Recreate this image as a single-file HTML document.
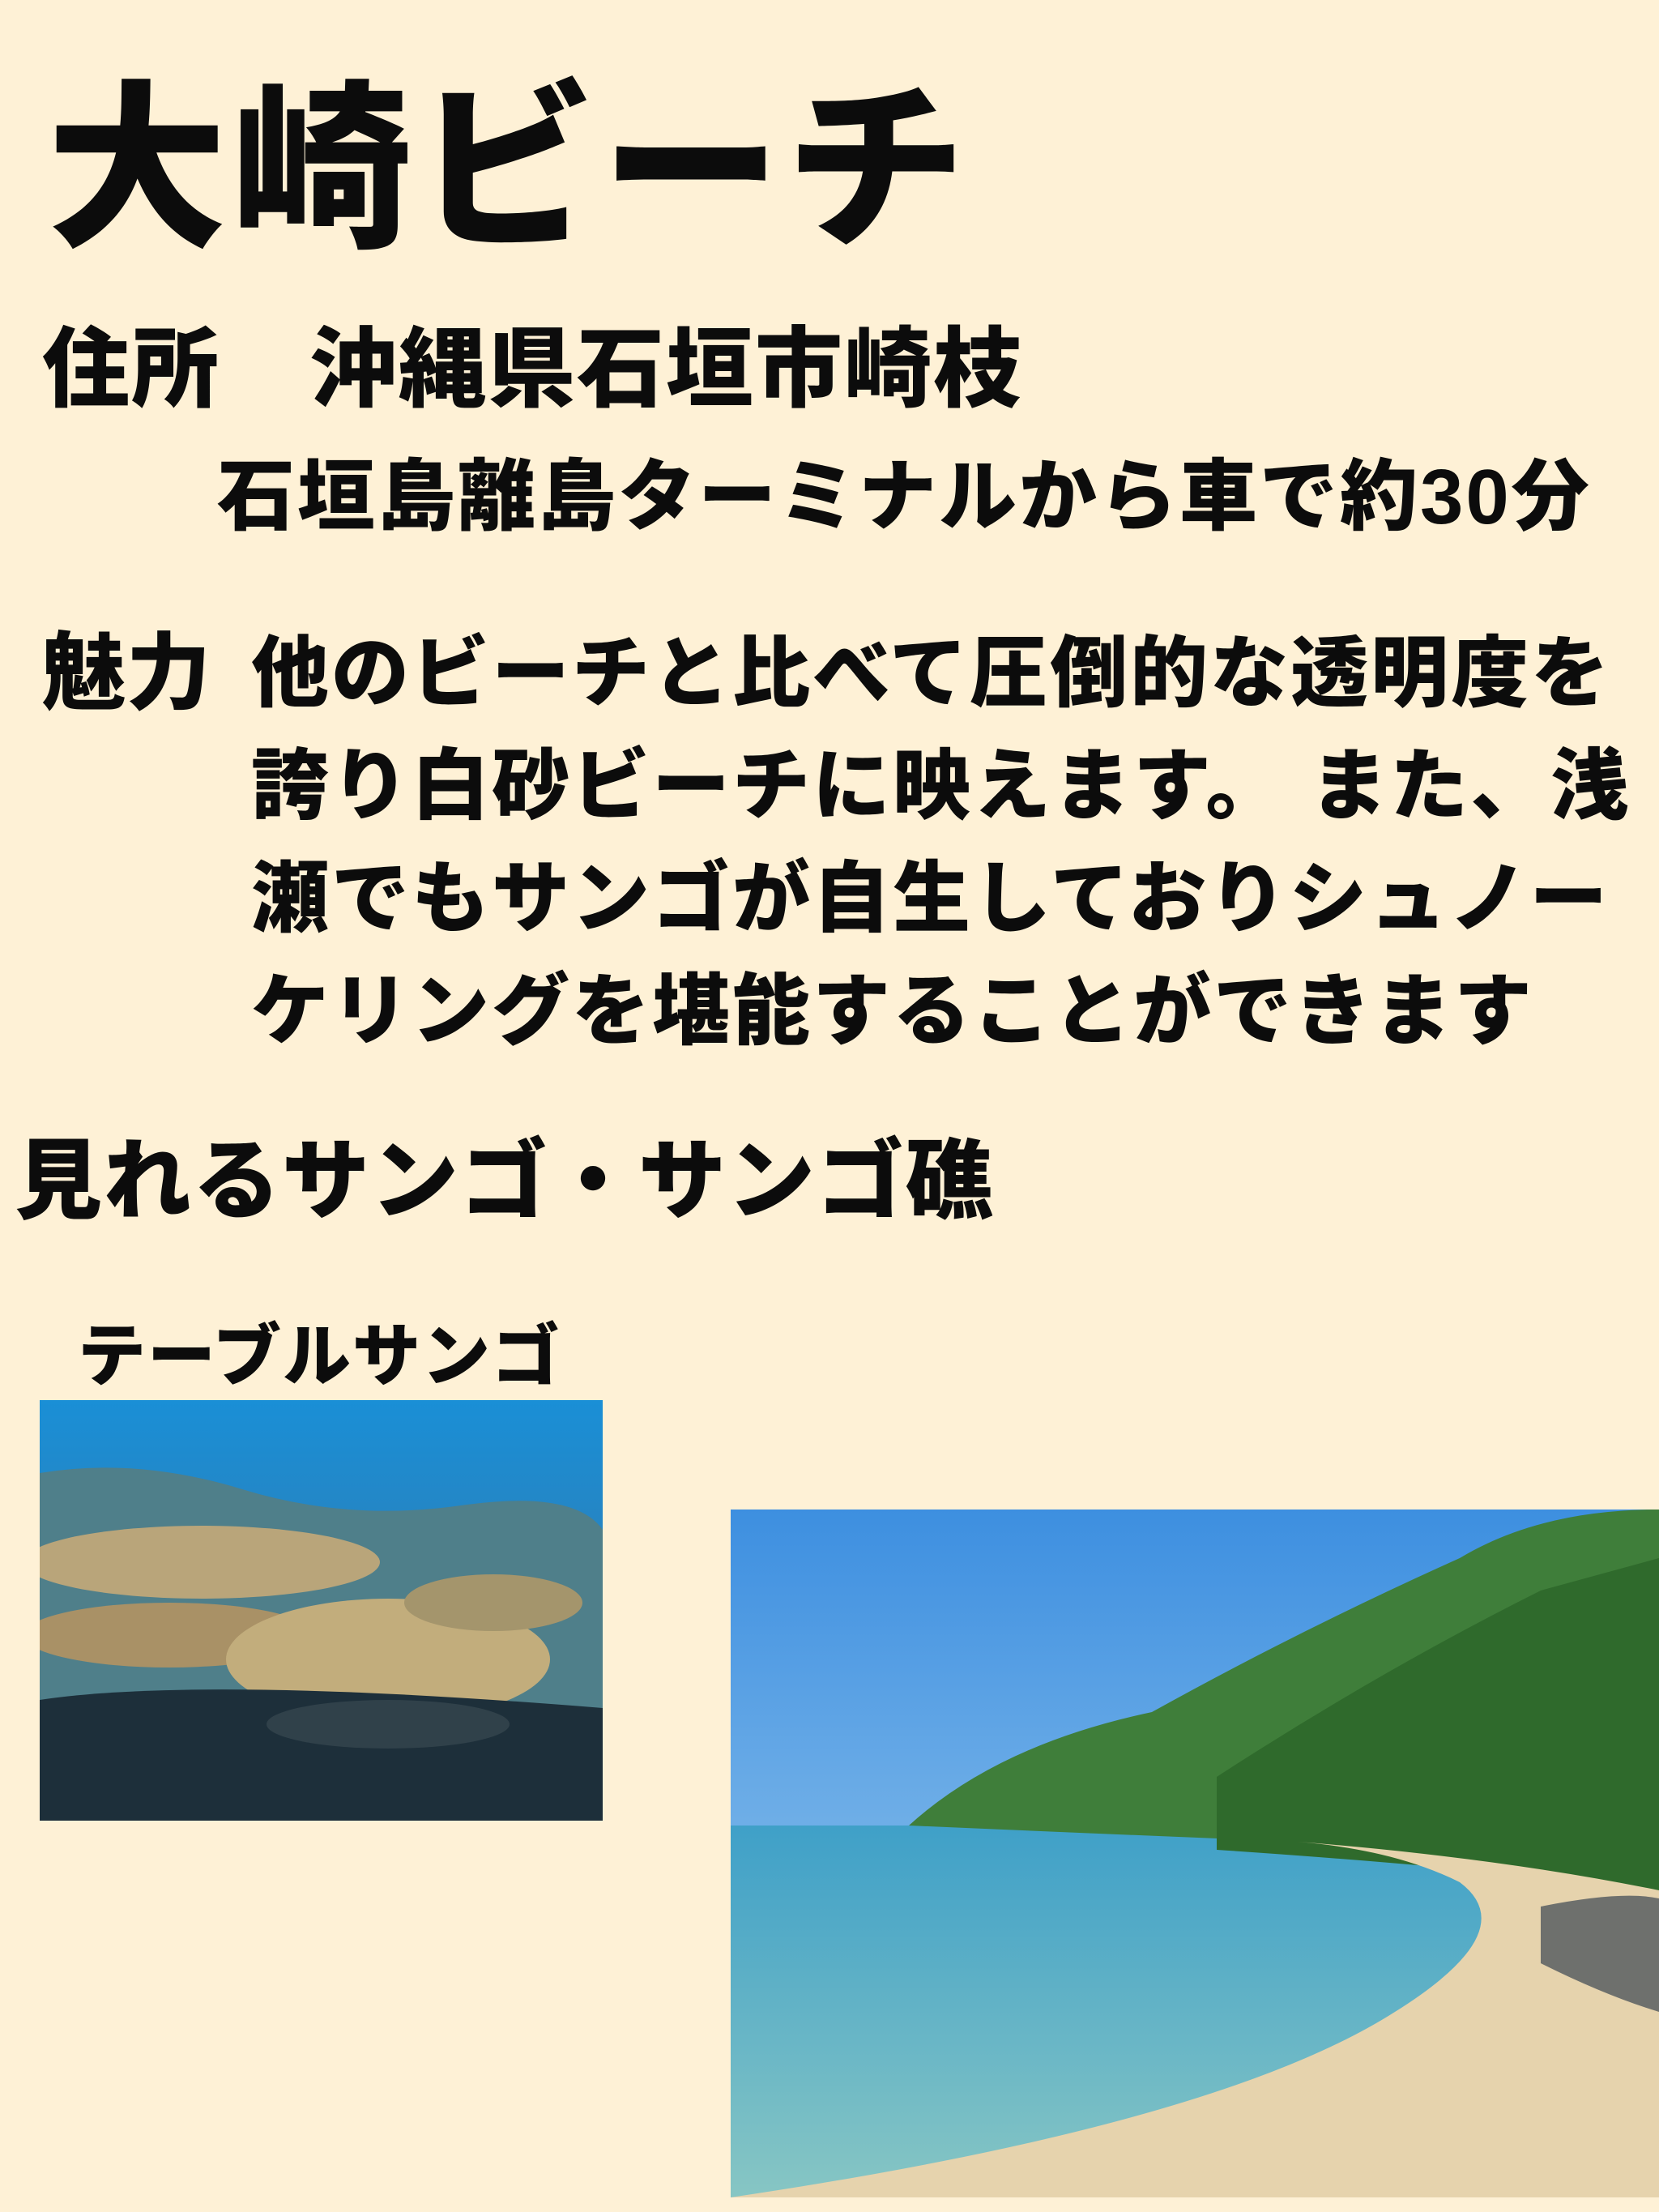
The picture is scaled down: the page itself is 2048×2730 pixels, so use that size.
<!DOCTYPE html>
<html><head><meta charset="utf-8"><style>
html,body{margin:0;padding:0}
body{width:2048px;height:2730px;background:#fef1d6;position:relative;overflow:hidden;font-family:"Liberation Sans","Noto Sans CJK JP",sans-serif;font-weight:900;color:#0c0c0c}
.t{position:absolute;white-space:nowrap;line-height:1}
</style></head><body>
<div class="t" style="left:58px;top:100px;font-size:222px;letter-spacing:6px">大崎ビーチ</div>
<div class="t" style="left:52px;top:402px;font-size:108px;letter-spacing:2px">住所　沖縄県石垣市崎枝</div>
<div class="t" style="left:268px;top:566px;font-size:96px;letter-spacing:3px">石垣島離島ターミナルから車で約30分</div>
<div class="t" style="left:52px;top:780px;font-size:104px">魅力</div>
<div class="t" style="left:310px;top:762px;font-size:96px;line-height:139px;letter-spacing:3px;white-space:normal;width:1720px">他のビーチと比べて圧倒的な透明度を<br>誇り白砂ビーチに映えます。 また、浅<br>瀬でもサンゴが自生しておりシュノー<br>ケリングを堪能することができます</div>
<div class="t" style="left:18px;top:1404px;font-size:108px;letter-spacing:2px">見れるサンゴ・サンゴ礁</div>
<div class="t" style="left:96px;top:1632px;font-size:84px;letter-spacing:2px">テーブルサンゴ</div>
<svg style="position:absolute;left:49px;top:1728px" width="695" height="519" viewBox="0 0 695 519">
<defs><linearGradient id="w" x1="0" y1="0" x2="0" y2="1"><stop offset="0" stop-color="#1a8fd6"/><stop offset="0.5" stop-color="#2c7fb8"/><stop offset="1" stop-color="#123a58"/></linearGradient></defs>
<rect width="695" height="519" fill="url(#w)"/>
<path d="M0 90 Q120 70 250 110 T520 130 T695 160 V519 H0Z" fill="#4f7f8a"/>
<ellipse cx="200" cy="200" rx="220" ry="45" fill="#b9a57a"/>
<ellipse cx="160" cy="290" rx="180" ry="40" fill="#a99166"/>
<ellipse cx="430" cy="320" rx="200" ry="75" fill="#c2ad7c"/>
<ellipse cx="560" cy="250" rx="110" ry="35" fill="#a4956c"/>
<path d="M0 370 Q200 340 695 380 V519 H0Z" fill="#1d2f3a"/>
<ellipse cx="430" cy="400" rx="150" ry="30" fill="#30414a"/>
</svg>
<svg style="position:absolute;left:902px;top:1863px" width="1146" height="849" viewBox="0 0 1146 849">
<defs><linearGradient id="s" x1="0" y1="0" x2="0" y2="1"><stop offset="0" stop-color="#3d8fe0"/><stop offset="1" stop-color="#a9d3f0"/></linearGradient>
<linearGradient id="sea" x1="0" y1="0" x2="0" y2="1"><stop offset="0" stop-color="#3fa0c8"/><stop offset="1" stop-color="#87c6c4"/></linearGradient></defs>
<rect width="1146" height="849" fill="url(#s)"/>
<rect y="390" width="1146" height="459" fill="url(#sea)"/>
<path d="M220 390 Q330 290 520 250 Q700 150 900 60 Q1000 0 1146 0 V470 Q900 430 700 410 Q450 400 220 390Z" fill="#3f7e3a"/>
<path d="M600 330 Q800 200 1000 100 L1146 60 V470 Q900 440 600 420Z" fill="#2f6a2c"/>
<path d="M700 410 Q820 420 900 460 Q980 520 820 620 Q600 760 0 849 H1146 V470 Q950 430 700 410Z" fill="#e6d3ad"/>
<path d="M1000 490 Q1100 470 1146 480 V620 Q1080 600 1000 560Z" fill="#6e706d"/>
</svg>
</body></html>
